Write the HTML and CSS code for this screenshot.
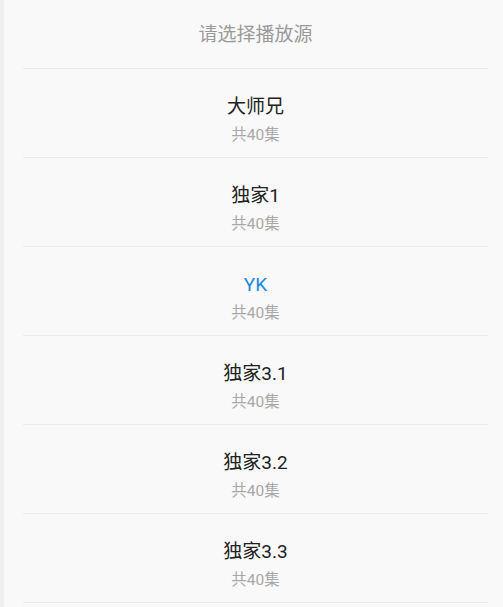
FILE: index.html
```html
<!DOCTYPE html>
<html lang="zh">
<head>
<meta charset="utf-8">
<title>请选择播放源</title>
<link rel="stylesheet" href="styles.css">
</head>
<body>
<div class="sheet">
  <div class="title">请选择播放源</div>
  <ul class="list">
    <li class="item"><div class="name">大师兄</div><div class="count">共40集</div></li>
    <li class="item"><div class="name">独家1</div><div class="count">共40集</div></li>
    <li class="item active"><div class="name">YK</div><div class="count">共40集</div></li>
    <li class="item"><div class="name">独家3.1</div><div class="count">共40集</div></li>
    <li class="item"><div class="name">独家3.2</div><div class="count">共40集</div></li>
    <li class="item"><div class="name">独家3.3</div><div class="count">共40集</div></li>
  </ul>
</div>
</body>
</html>
```

FILE: styles.css
```css
html, body {
  margin: 0;
  padding: 0;
  height: 100%;
  background: #f9f9f9;
  font-family: Roboto, "Noto Sans CJK SC", sans-serif;
}
.sheet {
  min-height: 100%;
  border-left: 4px solid #f0f0f0;
  box-sizing: border-box;
  padding: 0 15px 0 19px;
}
.title {
  height: 69px;
  display: flex;
  align-items: center;
  justify-content: center;
  font-size: 19px;
  color: #9a9a9a;
  border-bottom: 1px solid #ebebeb;
  box-sizing: border-box;
  padding-bottom: 4px;
}
.list {
  list-style: none;
  margin: 0;
  padding: 0;
}
.item {
  height: 89px;
  box-sizing: border-box;
  border-bottom: 1px solid #ebebeb;
  display: flex;
  flex-direction: column;
  align-items: center;
  padding-top: 25px;
}
.name {
  font-size: 19px;
  line-height: 26px;
  color: #222;
}
.active .name {
  color: #1e88e5;
}
.count {
  font-size: 15.5px;
  line-height: 20px;
  margin-top: 5px;
  color: #a8a8a8;
}
```
